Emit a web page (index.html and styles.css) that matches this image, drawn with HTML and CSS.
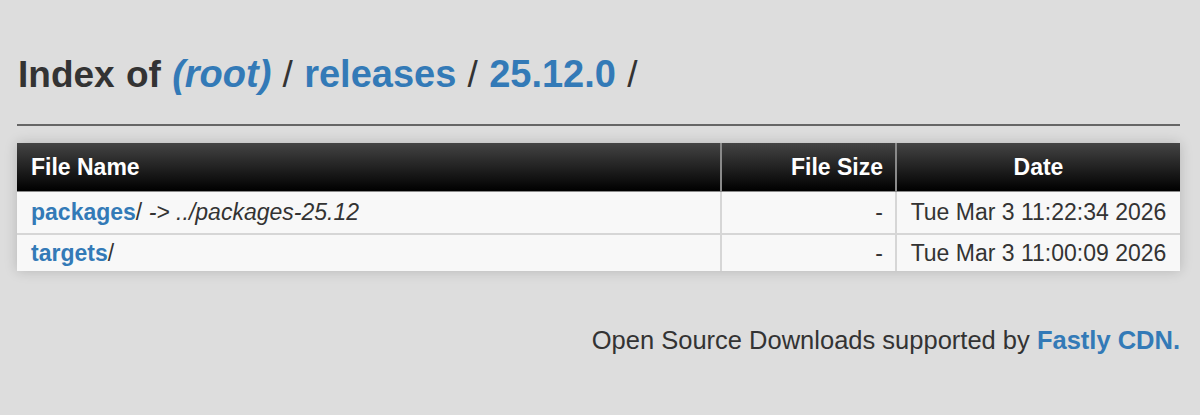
FILE: index.html
```html
<!DOCTYPE html>
<html>
<head>
<meta charset="utf-8">
<title>Index of /releases/25.12.0/</title>
<link rel="stylesheet" href="styles.css">
</head>
<body>
<div class="page">
  <h1 class="title">Index of <a href="#"><em>(root)</em></a> <span class="sep">/</span> <a href="#">releases</a> <span class="sep">/</span> <a href="#">25.12.0</a> <span class="sep">/</span></h1>
  <table class="listing">
    <thead>
      <tr>
        <th class="n">File Name</th>
        <th class="s">File Size</th>
        <th class="d">Date</th>
      </tr>
    </thead>
    <tbody>
      <tr>
        <td class="n"><a href="#">packages</a>/ <em>-&gt; ../packages-25.12</em></td>
        <td class="s">-</td>
        <td class="d">Tue Mar 3 11:22:34 2026</td>
      </tr>
      <tr>
        <td class="n"><a href="#">targets</a>/</td>
        <td class="s">-</td>
        <td class="d">Tue Mar 3 11:00:09 2026</td>
      </tr>
    </tbody>
  </table>
  <p class="footer">Open Source Downloads supported by <a href="#">Fastly CDN.</a></p>
</div>
</body>
</html>
```

FILE: styles.css
```css
html, body {
  margin: 0;
  padding: 0;
}
body {
  background: #dddddd;
  color: #333333;
  font-family: "Liberation Sans", Arial, sans-serif;
}
.page {
  padding: 53px 20px 0 17px;
}
.title {
  margin: 0;
  padding: 0 0 28px 1px;
  font-size: 37px;
  line-height: 42px;
  font-weight: bold;
  color: #333333;
  word-spacing: 1px;
  border-bottom: 2px solid #666666;
}
.title a {
  font-size: 38px;
}
.title .sep {
  font-weight: normal;
}
a {
  color: #337ab7;
  text-decoration: none;
  font-weight: bold;
}
.listing {
  margin-top: 17px;
  width: 1163px;
  border-collapse: collapse;
  box-shadow: 0 0 12px rgba(0, 0, 0, 0.18);
  font-size: 23px;
}
.listing th {
  background: linear-gradient(to bottom, #444444, #000000);
  color: #ffffff;
  font-weight: bold;
  height: 48px;
  padding: 0 12px;
  border-left: 2px solid #8a8a8a;
  border-bottom: 1px solid #8a8a8a;
}
.listing th:first-child {
  border-left: none;
}
.listing td {
  background: #f8f8f8;
  padding: 0 12px;
  border-left: 2px solid #d6d6d6;
  border-top: 2px solid #d6d6d6;
  white-space: nowrap;
}
.listing tbody tr:first-child td {
  border-top: none;
  height: 41px;
}
.listing tbody tr:last-child td {
  height: 36px;
}
.listing td:first-child {
  border-left: none;
}
.listing .n {
  text-align: left;
  padding-left: 14px;
}
.listing .s {
  text-align: right;
  width: 149px;
}
.listing .d {
  text-align: center;
  width: 259px;
}
.listing td em {
  font-style: italic;
}
.footer {
  margin: 54px 0 0 0;
  text-align: right;
  font-size: 25.5px;
  line-height: 30px;
}
```
